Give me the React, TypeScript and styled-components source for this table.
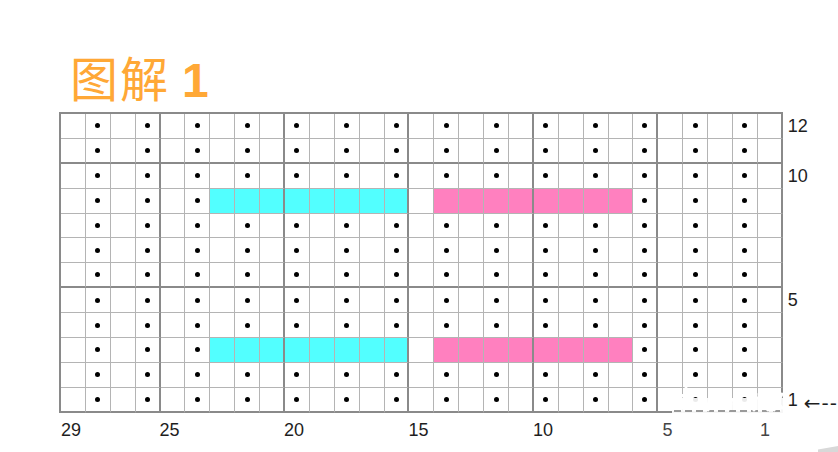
import React from 'react'
import styled, { createGlobalStyle } from 'styled-components'

const COLS = 29
const ROWS = 12
const CELL = 24.9

const GlobalStyle = createGlobalStyle`
  html, body {
    margin: 0;
    padding: 0;
    background: #ffffff;
  }
  body {
    font-family: "Liberation Sans", Arial, sans-serif;
  }
`

const Page = styled.div`
  width: 838px;
  height: 452px;
  box-sizing: border-box;
  padding: 47px 0 0 59px;
  position: relative;
  overflow: hidden;
  background: #ffffff;
`

const Title = styled.h1`
  margin: 0 0 7px 11px;
  height: 58px;
  line-height: 58px;
  font-size: 48px;
  color: #ffa836;
  white-space: nowrap;
`

const TitleCjk = styled.span`
  font-family: "Noto Sans CJK SC", "Noto Sans CJK JP", sans-serif;
  font-weight: 400;
  letter-spacing: 2px;
`

const TitleNum = styled.span`
  font-family: "Liberation Sans", Arial, sans-serif;
  font-weight: 700;
  margin-left: 12px;
`

const ChartRow = styled.div`
  display: flex;
  align-items: flex-start;
`

const Grid = styled.div`
  display: grid;
  grid-template-columns: repeat(${COLS}, ${CELL}px);
  grid-template-rows: repeat(${ROWS}, ${CELL}px);
  border-left: 2px solid #8a8a8a;
  border-top: 2px solid #8a8a8a;
  position: relative;
`

type Fill = 'cyan' | 'pink' | undefined

const fillColor = (f: Fill) => (f === 'cyan' ? '#52ffff' : f === 'pink' ? '#ff80bf' : '#ffffff')

const Cell = styled.div<{ $thickRight: boolean; $thickBottom: boolean; $fill: Fill }>`
  box-sizing: border-box;
  display: flex;
  align-items: center;
  justify-content: center;
  background: ${({ $fill }) => fillColor($fill)};
  border-right: ${({ $thickRight }) => ($thickRight ? '2px solid #8a8a8a' : '1px solid #b4b4b4')};
  border-bottom: ${({ $thickBottom }) => ($thickBottom ? '2px solid #8a8a8a' : '1px solid #b4b4b4')};
`

const Dot = styled.span`
  width: 5px;
  height: 5px;
  border-radius: 50%;
  background: #000000;
`

const RowLabels = styled.div`
  display: grid;
  grid-template-rows: repeat(${ROWS}, ${CELL}px);
  padding-top: 2px;
  padding-left: 5px;
`

const RowLabel = styled.div`
  display: flex;
  align-items: center;
  font-size: 18px;
  color: #1e1e1e;
  white-space: nowrap;
`

const Arrow = styled.span`
  font-family: "DejaVu Sans", sans-serif;
  font-size: 20px;
  margin-left: 6px;
  margin-top: 6px;
  letter-spacing: 1px;
`

const ColLabels = styled.div`
  display: grid;
  grid-template-columns: repeat(${COLS}, ${CELL}px);
  margin-top: 7px;
  margin-left: 1px;
`

const ColLabel = styled.div<{ $shift: number; $faded?: boolean }>`
  font-size: 18px;
  line-height: 20px;
  color: ${({ $faded }) => ($faded ? '#444444' : '#1e1e1e')};
  padding-left: ${({ $shift }) => $shift}px;
  white-space: nowrap;
`

const Watermark = styled.svg`
  position: absolute;
  left: 672px;
  top: 384px;
`

const CornerMark = styled.div`
  position: absolute;
  right: 0;
  bottom: 0;
  width: 20px;
  height: 6px;
  background: #d8d8d8;
  clip-path: polygon(0 60%, 100% 0, 100% 100%, 0 100%);
`

const fillAt = (row: number, col: number): Fill => {
  if (row !== 9 && row !== 3) return undefined
  if (col >= 16 && col <= 23) return 'cyan'
  if (col >= 7 && col <= 14) return 'pink'
  return undefined
}

const rowLabels: Record<number, string> = { 12: '12', 10: '10', 5: '5', 1: '1' }
const colLabels: Record<number, { text: string; shift: number }> = {
  29: { text: '29', shift: 1 },
  25: { text: '25', shift: 0 },
  20: { text: '20', shift: 0 },
  15: { text: '15', shift: 0 },
  10: { text: '10', shift: -2 },
  5: { text: '5', shift: 5 },
  1: { text: '1', shift: 3 },
}

const App: React.FC = () => {
  const rows = Array.from({ length: ROWS }, (_, i) => ROWS - i)
  const cols = Array.from({ length: COLS }, (_, i) => COLS - i)

  return (
    <>
      <GlobalStyle />
      <Page>
        <Title>
          <TitleCjk>图解</TitleCjk>
          <TitleNum>1</TitleNum>
        </Title>
        <ChartRow>
          <Grid>
            {rows.map((r) =>
              cols.map((c) => {
                const fill = fillAt(r, c)
                return (
                  <Cell
                    key={`${r}-${c}`}
                    $thickRight={c === 1 || c % 5 === 1}
                    $thickBottom={r === 1 || r % 5 === 1}
                    $fill={fill}
                  >
                    {!fill && c % 2 === 0 && <Dot />}
                  </Cell>
                )
              })
            )}
          </Grid>
          <RowLabels>
            {rows.map((r) => (
              <RowLabel key={r}>
                {rowLabels[r]}
                {r === 1 && <Arrow>←--</Arrow>}
              </RowLabel>
            ))}
          </RowLabels>
        </ChartRow>
        <ColLabels>
          {cols.map((c) => (
            <ColLabel key={c} $shift={colLabels[c]?.shift ?? 0} $faded={c <= 5}>
              {colLabels[c]?.text ?? ''}
            </ColLabel>
          ))}
        </ColLabels>
        <Watermark width="114" height="34" viewBox="0 0 114 34">
          <rect x="0" y="14" width="114" height="16" fill="#ffffff" opacity="0.92" />
          <path d="M2 27 L112 27" stroke="#9a9a9a" strokeWidth="2" strokeDasharray="7 4" />
          <g fill="none" stroke="#ffffff" strokeWidth="3" strokeLinecap="round">
            <path d="M14 4 L10 24 M6 12 L22 10" />
            <path d="M30 20 L44 20 M38 12 L36 26" />
            <path d="M52 16 L66 16 M58 10 L56 26 M62 20 L70 24" />
            <path d="M78 14 L92 14 M84 10 L82 26 M88 18 L96 26" />
            <path d="M100 12 L110 24 M110 10 L102 26" />
          </g>
        </Watermark>
        <CornerMark />
      </Page>
    </>
  )
}

export default App
